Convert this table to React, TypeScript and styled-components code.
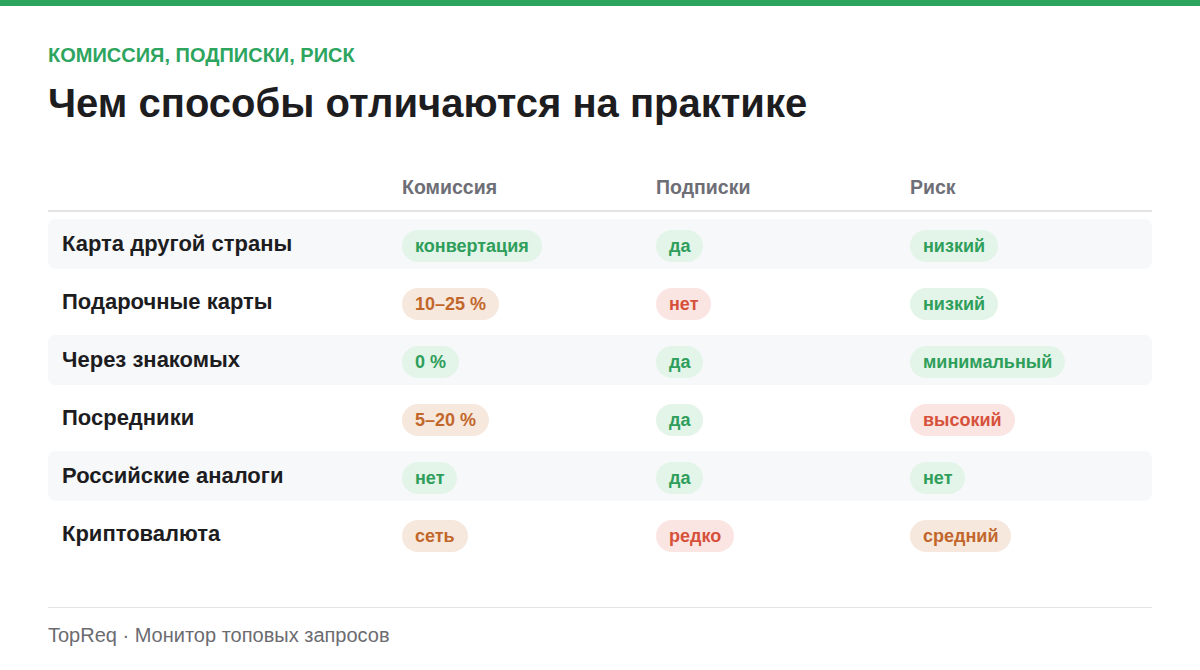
import React from "react";
import styled, { createGlobalStyle } from "styled-components";

const Global = createGlobalStyle`
  html, body { margin: 0; padding: 0; background: #ffffff; }
  body { font-family: "Liberation Sans", Arial, sans-serif; color: #1d1d1f; }
  * { box-sizing: border-box; }
`;

const Page = styled.div`
  width: 1200px;
  height: 670px;
  display: flex;
  flex-direction: column;
  border-top: 6px solid #2ea55f;
  background: #fff;
`;

const Content = styled.div`
  flex: 1;
  display: flex;
  flex-direction: column;
  padding: 38px 48px 0;
`;

const Eyebrow = styled.div`
  font-size: 20px;
  font-weight: 700;
  color: #2ea55f;
  text-transform: uppercase;
  line-height: 22px;
`;

const Title = styled.h1`
  margin: 13px 0 0;
  font-size: 40px;
  font-weight: 700;
  line-height: 48px;
  color: #1d1d1f;
`;

const Table = styled.div`
  margin-top: 45px;
  display: flex;
  flex-direction: column;
  gap: 8px;
`;

const grid = `
  display: grid;
  grid-template-columns: 340px 254px 254px 1fr;
`;

const HeadRow = styled.div`
  ${grid}
  align-items: end;
  height: 40px;
  padding-bottom: 12px;
  margin-bottom: -1px;
  border-bottom: 2px solid #e4e4e6;
`;

const HeadCell = styled.div`
  padding: 0 14px;
  font-size: 19.5px;
  line-height: 22px;
  font-weight: 700;
  color: #6e6e76;
`;

const Row = styled.div<{ $shaded: boolean }>`
  ${grid}
  align-items: center;
  height: 50px;
  border-radius: 8px;
  background: ${(p) => (p.$shaded ? "#f7f8fa" : "transparent")};
`;

const Label = styled.div`
  padding: 0 14px;
  font-size: 22px;
  font-weight: 700;
  color: #1d1d1f;
`;

const Cell = styled.div`
  padding: 4px 14px 0;
  display: flex;
`;

type Tone = "good" | "mid" | "bad";

const tones: Record<Tone, { bg: string; fg: string }> = {
  good: { bg: "#e3f4e8", fg: "#2e9e5b" },
  mid: { bg: "#f7e8dd", fg: "#c2672c" },
  bad: { bg: "#fbe5e2", fg: "#d6513b" },
};

const Pill = styled.span<{ $tone: Tone }>`
  display: inline-flex;
  align-items: center;
  height: 32px;
  padding: 0 13px;
  border-radius: 16px;
  font-size: 18px;
  font-weight: 700;
  background: ${(p) => tones[p.$tone].bg};
  color: ${(p) => tones[p.$tone].fg};
`;

const Footer = styled.div`
  margin: auto 48px 0;
  border-top: 1px solid #e4e4e6;
  padding: 16px 0 24px;
  font-size: 20px;
  color: #6b6b70;
  line-height: 22px;
`;

type Item = [string, Tone];
const rows: { label: string; cells: Item[] }[] = [
  { label: "Карта другой страны", cells: [["конвертация", "good"], ["да", "good"], ["низкий", "good"]] },
  { label: "Подарочные карты", cells: [["10–25 %", "mid"], ["нет", "bad"], ["низкий", "good"]] },
  { label: "Через знакомых", cells: [["0 %", "good"], ["да", "good"], ["минимальный", "good"]] },
  { label: "Посредники", cells: [["5–20 %", "mid"], ["да", "good"], ["высокий", "bad"]] },
  { label: "Российские аналоги", cells: [["нет", "good"], ["да", "good"], ["нет", "good"]] },
  { label: "Криптовалюта", cells: [["сеть", "mid"], ["редко", "bad"], ["средний", "mid"]] },
];

export default function App() {
  return (
    <Page>
      <Global />
      <Content>
        <Eyebrow>Комиссия, подписки, риск</Eyebrow>
        <Title>Чем способы отличаются на практике</Title>
        <Table>
          <HeadRow>
            <HeadCell />
            <HeadCell>Комиссия</HeadCell>
            <HeadCell>Подписки</HeadCell>
            <HeadCell>Риск</HeadCell>
          </HeadRow>
          {rows.map((r, i) => (
            <Row key={r.label} $shaded={i % 2 === 0}>
              <Label>{r.label}</Label>
              {r.cells.map(([t, tone], j) => (
                <Cell key={j}>
                  <Pill $tone={tone}>{t}</Pill>
                </Cell>
              ))}
            </Row>
          ))}
        </Table>
      </Content>
      <Footer>TopReq · Монитор топовых запросов</Footer>
    </Page>
  );
}
